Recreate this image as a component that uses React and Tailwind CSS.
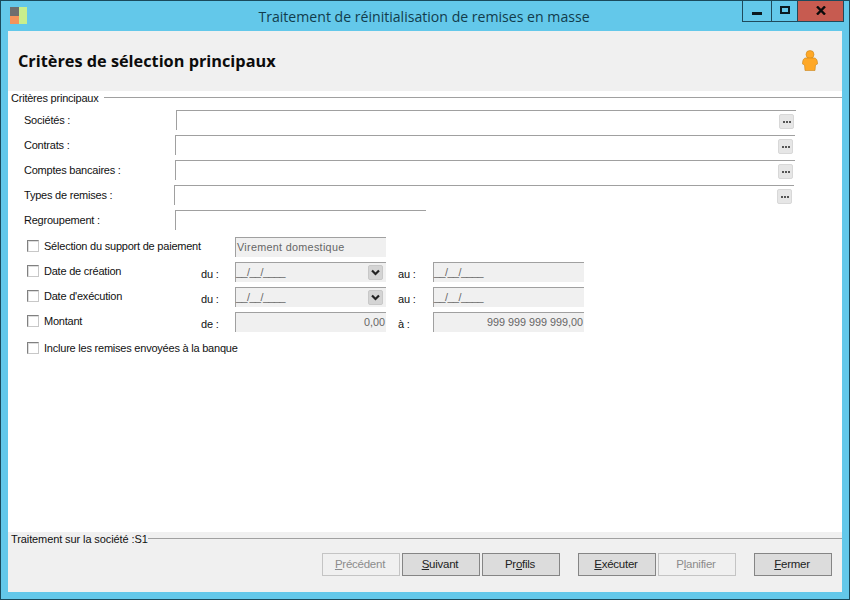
import React from "react";

const sans = "font-['Liberation_Sans',sans-serif]";
const labelText = "text-[11px] leading-[14px] tracking-[-0.22px] text-[#111]";

function Mnemonic({ before = "", letter, after = "" }) {
  return (
    <span>
      {before}
      <span className="underline underline-offset-1">{letter}</span>
      {after}
    </span>
  );
}

function PickerRow({ label, left, width }) {
  return (
    <div className="flex h-[25px] items-start">
      <span className={`mt-[3px] w-[152px] shrink-0 pl-4 ${labelText}`}>{label}</span>
      <div
        className="relative h-[20px] border-t border-l border-[#a0a0a0] bg-white"
        style={{ marginLeft: left, width }}
      >
        <div className="absolute top-[3px] right-[2px] flex h-[15px] w-[15px] items-center justify-center gap-[1px] rounded-[2px] border border-[#d8d8d8] bg-[#e6e6e6]">
          <div className="h-[2px] w-[2px] bg-[#555]" />
          <div className="h-[2px] w-[2px] bg-[#555]" />
          <div className="h-[2px] w-[2px] bg-[#555]" />
        </div>
      </div>
    </div>
  );
}

function ReadOnlyBox({ value, right, textClass = "", children }) {
  return (
    <div
      className={`relative flex h-[20px] w-[151px] items-center border-t border-l border-[#a0a0a0] bg-[#f0f0f0] px-[1px] text-[10.8px] text-[#666] ${
        right ? "justify-end" : ""
      }`}
    >
      <span className={textClass}>{value}</span>
      {children}
    </div>
  );
}

function Checkbox() {
  return <div className="h-[12px] w-[12px] shrink-0 border border-t-[#808080] border-r-[#c8c8c8] border-b-[#c8c8c8] border-l-[#808080] bg-white shadow-[inset_1px_1px_0_#ddd]" />;
}

function Chevron() {
  return (
    <div className="absolute top-[2px] right-[3px] flex h-[15px] w-[15px] items-center justify-center rounded-[2px] border border-[#c8c8c8] bg-[#d4d4d4]">
      <svg width="9" height="7" viewBox="0 0 9 7">
        <path d="M1 1.5 L4.5 5 L8 1.5" fill="none" stroke="#222" strokeWidth="2.2" />
      </svg>
    </div>
  );
}

function CheckRow({ label, unit, value, right, chevron, to, toValue }) {
  const dateClass = right ? "" : "-ml-[1px] tracking-[-0.5px]";
  return (
    <div className="flex h-[25px] items-start">
      <div className={`mt-[2px] ml-[19px] flex w-[174px] shrink-0 items-center gap-[5px] ${labelText}`}>
        <Checkbox />
        <span>{label}</span>
      </div>
      <span className={`mt-[5px] w-[34px] shrink-0 ${labelText}`}>{unit}</span>
      <ReadOnlyBox value={value} right={right} textClass={dateClass}>
        {chevron && <Chevron />}
      </ReadOnlyBox>
      <span className={`mt-[5px] ml-[12px] w-[35px] shrink-0 ${labelText}`}>{to}</span>
      <ReadOnlyBox value={toValue} right={right} textClass={dateClass} />
    </div>
  );
}

function Btn({ children, disabled, className = "" }) {
  return (
    <button
      className={`flex h-[23px] w-[78px] items-center justify-center border pt-[1px] pr-[2px] text-[11.5px] tracking-[-0.25px] ${
        disabled ? "border-[#c4c4c4] bg-[#f0f0f0] text-[#8c8c8c]" : "border-[#858585] bg-[#dcdcdc] text-[#222]"
      } ${className}`}
    >
      {children}
    </button>
  );
}

export default function App() {
  return (
    <div className={`flex h-[600px] w-[850px] flex-col overflow-hidden border border-[#1a4a5c] bg-[#63c8ea] ${sans}`}>
      {/* Title bar */}
      <div className="flex h-[30px] shrink-0">
        <svg className="mt-[6px] ml-[9px]" width="17" height="17" viewBox="0 0 17 17">
          <rect x="0" y="0" width="9" height="9" fill="#6e6e6e" />
          <rect x="0" y="9" width="9" height="8" fill="#f4935a" />
          <rect x="9" y="0" width="8" height="17" fill="#c8ee8c" />
        </svg>
        <div className="ml-[4px] flex-1 pt-[6px] pl-[75px] text-center font-['Open_Sans',sans-serif] text-[14.1px] leading-[20px] text-[#123c4c]">
          Traitement de réinitialisation de remises en masse
        </div>
        <div className="mr-[5px] flex h-[21px] border-x border-b border-[#1f4a5c]">
          <div className="flex w-[28px] items-end justify-center pb-[6px]">
            <div className="h-[3px] w-[10px] bg-[#0b1a20]" />
          </div>
          <div className="flex w-[26px] items-center justify-center border-l border-[#1f4a5c] pb-[2px]">
            <div className="h-[8px] w-[10px] border-2 border-[#0b1a20]" />
          </div>
          <div className="flex w-[46px] items-center justify-center border-l border-[#1f4a5c] bg-[#c75b50] pb-[2px]">
            <svg width="10" height="9" viewBox="0 0 10 9">
              <path d="M1 0.5 L9 8.5 M9 0.5 L1 8.5" stroke="#0b0b0b" strokeWidth="2.4" fill="none" />
            </svg>
          </div>
        </div>
      </div>

      {/* Body */}
      <div className="mx-[7px] flex h-[561px] w-[834px] flex-col">
        <div className="flex h-[60px] shrink-0 items-center justify-between bg-[#f0f0f0] pr-[24px] pl-[10px]">
          <h1 className="font-['Open_Sans',sans-serif] text-[16.3px] font-bold text-[#0c0c0c]">Critères de sélection principaux</h1>
          <svg className="mb-[2px]" width="16" height="21" viewBox="0 0 16 21">
            <circle cx="8" cy="4.5" r="4" fill="#ffa826" stroke="#c9861c" strokeWidth="0.6" />
            <path d="M3 8 C1 9 .5 11 .5 14 L2.5 15 L3 20.5 L13 20.5 L13.5 15 L15.5 14 C15.5 11 15 9 13 8 Z" fill="#ffa826" stroke="#c9861c" strokeWidth="0.6" />
          </svg>
        </div>

        <div className="flex h-[441px] shrink-0 flex-col bg-white">
          <div className="flex h-[19px] shrink-0 items-start">
            <span className={`pl-[3px] ${labelText}`}>Critères principaux</span>
            <div className="mt-[6px] ml-[5px] h-[1px] flex-1 bg-[#a0a0a0]" />
          </div>
          <PickerRow label="Sociétés :" left={16} width={620} />
          <PickerRow label="Contrats :" left={15} width={620} />
          <PickerRow label="Comptes bancaires :" left={15} width={620} />
          <PickerRow label="Types de remises :" left={14} width={620} />
          <div className="flex h-[27px] items-start">
            <span className={`mt-[3px] w-[152px] shrink-0 pl-4 ${labelText}`}>Regroupement :</span>
            <div className="ml-[15px] h-[20px] w-[251px] border-t border-l border-[#a0a0a0]" />
          </div>
          <div className="flex h-[25px] items-start">
            <div className={`mt-[2px] ml-[19px] flex w-[208px] shrink-0 items-center gap-[5px] ${labelText}`}>
              <Checkbox />
              <span>Sélection du support de paiement</span>
            </div>
            <ReadOnlyBox value="Virement domestique" textClass="tracking-[0.3px]" />
          </div>
          <CheckRow label="Date de création" unit="du :" value="__/__/____" chevron to="au :" toValue="__/__/____" />
          <CheckRow label="Date d'exécution" unit="du :" value="__/__/____" chevron to="au :" toValue="__/__/____" />
          <CheckRow label="Montant" unit="de :" value="0,00" right to="à :" toValue="999 999 999 999,00" />
          <div className={`mt-[4px] ml-[19px] flex items-center gap-[5px] ${labelText}`}>
            <Checkbox />
            <span>Inclure les remises envoyées à la banque</span>
          </div>
        </div>

        {/* Footer */}
        <div className="flex flex-1 flex-col bg-[#f0f0f0]">
          <div className="flex h-[21px] shrink-0 items-start">
            <span className="pl-[3px] text-[11px] leading-[14px] tracking-[-0.1px] text-[#111]">Traitement sur la société :S1</span>
            <div className="mt-[6px] h-[1px] flex-1 bg-[#a0a0a0]" />
          </div>
          <div className="flex pl-[314px]">
            <Btn disabled><Mnemonic letter="P" after="récédent" /></Btn>
            <Btn className="ml-[2px]"><Mnemonic letter="S" after="uivant" /></Btn>
            <Btn className="ml-[2px]"><Mnemonic before="Pr" letter="o" after="fils" /></Btn>
            <Btn className="ml-[18px]"><Mnemonic letter="E" after="xécuter" /></Btn>
            <Btn disabled className="ml-[2px]"><Mnemonic before="P" letter="l" after="anifier" /></Btn>
            <Btn className="ml-[18px]"><Mnemonic letter="F" after="ermer" /></Btn>
          </div>
        </div>
      </div>
    </div>
  );
}
